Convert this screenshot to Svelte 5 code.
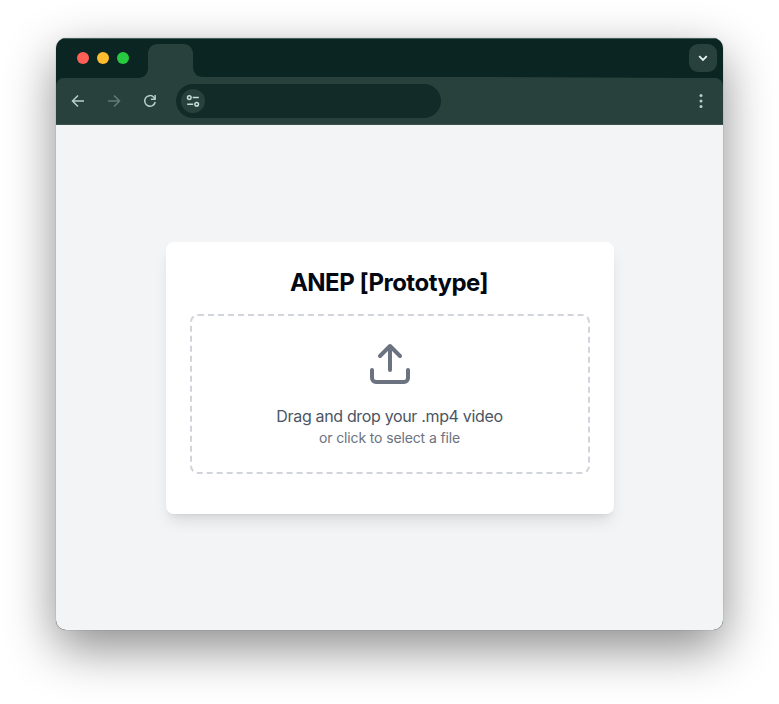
<script>
  const lights = ['#ff5f57', '#febc2e', '#28c840'];
</script>

<div class="desktop">
  <div class="window">
    <header class="tabs">
      <div class="lights">
        {#each lights as color}
          <span class="light" style="background: {color}"></span>
        {/each}
      </div>
      <svg class="tab" width="65" height="34" viewBox="0 0 65 34">
        <path d="M0 34C6 34 10 30 10 24V10C10 4 14 0 20 0H45C51 0 55 4 55 10V23C55 29 59 33 65 33V34Z" fill="#29413d" />
      </svg>
      <span class="strip"></span>
      <button class="tab-search" aria-label="Search tabs">
        <svg width="28" height="28" viewBox="0 0 28 28" fill="none" stroke="#e6f3f0" stroke-width="1.8">
          <path d="M10.2 12.2 14 16l3.8-3.8" />
        </svg>
      </button>
    </header>

    <nav class="toolbar">
      <svg class="nav-icon" width="16" height="16" viewBox="0 0 16 16" fill="none" stroke="#b5d0cb" stroke-width="1.5">
        <path d="M14 8H3M8 2.5 2.5 8 8 13.5" />
      </svg>
      <svg class="nav-icon" width="16" height="16" viewBox="0 0 16 16" fill="none" stroke="#657a76" stroke-width="1.5">
        <path d="M2 8h11M8 2.5 13.5 8 8 13.5" />
      </svg>
      <svg class="nav-icon" width="16" height="16" viewBox="0 0 16 16" fill="none" stroke="#b5d0cb" stroke-width="1.5">
        <path d="M13.2 9A5.3 5.3 0 1 1 11.8 4.2L13 5.6" />
        <path d="M13.9 2v5H8.9V5.5L12.4 5.5V2Z" fill="#b5d0cb" stroke="none" />
      </svg>
      <div class="address">
        <span class="site">
          <svg width="24" height="24" viewBox="0 0 24 24" fill="none" stroke="#c5dcd7" stroke-width="1.5">
            <circle cx="8.3" cy="8.6" r="1.8" />
            <path d="M11.7 8.6h6.1M6.2 15.3h6" />
            <circle cx="15.7" cy="15.3" r="1.8" />
          </svg>
        </span>
      </div>
      <svg class="more" width="16" height="16" viewBox="0 0 16 16" fill="#b5d0cb">
        <circle cx="8" cy="2.6" r="1.5" />
        <circle cx="8" cy="8" r="1.5" />
        <circle cx="8" cy="13.4" r="1.5" />
      </svg>
    </nav>

    <main>
      <section class="card">
        <h1>ANEP [Prototype]</h1>
        <div class="drop">
          <svg width="48" height="48" viewBox="0 0 24 24" fill="none" stroke="#6b7280" stroke-width="2" stroke-linecap="round" stroke-linejoin="round">
            <path d="M21 15v4a2 2 0 0 1-2 2H5a2 2 0 0 1-2-2v-4" />
            <path d="M17 8l-5-5-5 5M12 3v12" />
          </svg>
          <p class="lead">Drag and drop your .mp4 video</p>
          <p class="hint">or click to select a file</p>
        </div>
      </section>
    </main>
  </div>
</div>

<style>
  :global(body) {
    background: #fff;
  }
  .desktop {
    box-sizing: border-box;
    width: 779px;
    height: 704px;
    padding: 38px 56px 74px;
    overflow: hidden;
    font-family: Inter, 'Liberation Sans', sans-serif;
  }
  .window {
    display: flex;
    flex-direction: column;
    width: 667px;
    height: 592px;
    border-radius: 10px;
    overflow: hidden;
    background: #0b2622;
    box-shadow:
      0 0 1px rgba(0, 0, 0, 0.5),
      0 18px 50px rgba(0, 0, 0, 0.46);
  }
  .tabs {
    display: flex;
    align-items: flex-start;
    box-sizing: border-box;
    height: 40px;
    padding: 6px 6px 0 21px;
    box-shadow: inset 0 1px #46605b;
  }
  .lights {
    display: flex;
    gap: 8px;
    padding-top: 8px;
  }
  .light {
    width: 12px;
    height: 12px;
    border-radius: 50%;
  }
  .tab {
    margin-left: 9px;
  }
  .strip {
    flex: 1;
    align-self: flex-end;
    height: 1px;
    margin-right: 8px;
    background: linear-gradient(90deg, #29413d 60%, #0b2622);
  }
  .tab-search {
    width: 28px;
    height: 28px;
    padding: 0;
    border: 0;
    border-radius: 9px;
    background: #29413d;
  }
  .tab-search svg {
    display: block;
  }
  .toolbar {
    display: flex;
    align-items: center;
    box-sizing: border-box;
    height: 47px;
    padding: 0 14px;
    border-radius: 8px 8px 0 0;
    border-bottom: 1px solid #3b514e;
    background: #29413d;
  }
  .nav-icon {
    margin-right: 20px;
  }
  .address {
    display: flex;
    align-items: center;
    box-sizing: border-box;
    width: 265px;
    height: 34px;
    margin-left: -2px;
    padding-left: 5px;
    border-radius: 17px;
    background: #122b28;
  }
  .site {
    width: 24px;
    height: 24px;
    border-radius: 50%;
    background: #29413d;
  }
  .site svg {
    display: block;
  }
  .more {
    margin-left: auto;
  }
  main {
    display: flex;
    flex: 1;
    align-items: center;
    justify-content: center;
    background: #f3f4f6;
  }
  .card {
    box-sizing: border-box;
    width: 448px;
    height: 272px;
    margin-left: 1px;
    padding: 24px;
    border-radius: 8px;
    background: #fff;
    box-shadow:
      0 10px 15px -3px rgba(0, 0, 0, 0.1),
      0 4px 6px -4px rgba(0, 0, 0, 0.1);
  }
  h1 {
    margin: 0 0 16px;
    padding: 1px 2px 0 0;
    color: #030712;
    font-size: 24px;
    font-weight: 700;
    line-height: 31px;
    letter-spacing: -0.5px;
    text-align: center;
    white-space: nowrap;
  }
  .drop {
    display: flex;
    flex-direction: column;
    align-items: center;
    box-sizing: border-box;
    height: 160px;
    padding-top: 24px;
    border: 2px dashed #d1d5db;
    border-radius: 8px;
  }
  p {
    margin: 0;
    white-space: nowrap;
  }
  .lead {
    margin-top: 16px;
    padding-right: 1px;
    color: #4b5563;
    font-size: 16px;
    line-height: 24px;
    letter-spacing: -0.34px;
  }
  .hint {
    padding-right: 1px;
    color: #6b7280;
    font-size: 14px;
    line-height: 20px;
    letter-spacing: -0.13px;
  }
</style>
